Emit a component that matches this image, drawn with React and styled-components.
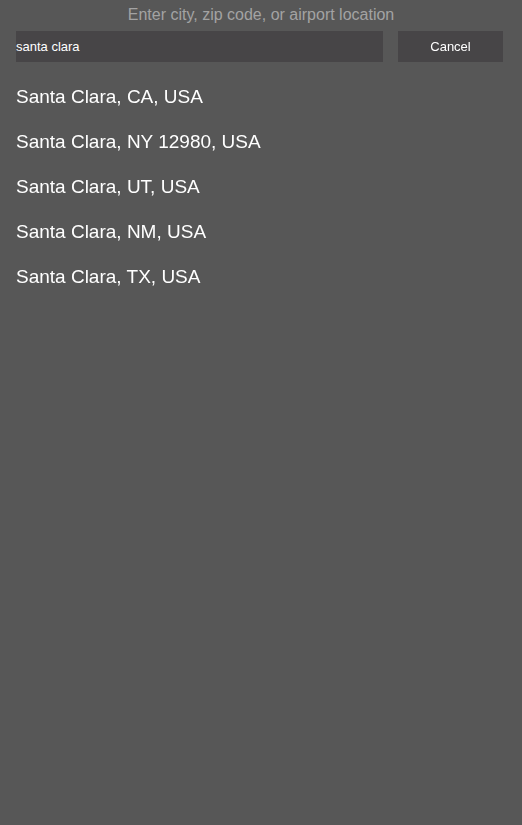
import React, { useState } from 'react'
import styled, { createGlobalStyle } from "styled-components";

const results = [
  "Santa Clara, CA, USA",
  "Santa Clara, NY 12980, USA",
  "Santa Clara, UT, USA",
  "Santa Clara, NM, USA",
  "Santa Clara, TX, USA",
]

const Global = createGlobalStyle`
  html, body {
    margin: 0;
    padding: 0;
    background: #575757;
  }
  body {
    font-family: "Liberation Sans", Arial, sans-serif;
  }
`;

const Page = styled.div`
  min-height: 825px;
  background: #575757;
  display: flex;
  flex-direction: column;
`;

const Prompt = styled.div`
  text-align: center;
  color: #a3a3a3;
  font-size: 16px;
  line-height: 18px;
  padding-top: 6px;
  height: 31px;
  box-sizing: border-box;
`;

const SearchBar = styled.div`
  display: flex;
  gap: 15px;
  padding: 0 19px 0 16px;
  height: 31px;
`;

const Input = styled.input`
  flex: 1;
  min-width: 0;
  background: #474547;
  border: none;
  outline: none;
  padding: 0;
  color: #fff;
  font-family: inherit;
  font-size: 13px;
  caret-color: #fff;
`;

const CancelButton = styled.button`
  width: 105px;
  background: #474547;
  border: none;
  color: #fff;
  font-family: inherit;
  font-size: 13px;
  padding: 0;
  cursor: pointer;
`;

const List = styled.ul`
  list-style: none;
  margin: 0;
  padding: 24px 0 0 16px;
  display: flex;
  flex-direction: column;
`;

const Item = styled.li`
  color: #fff;
  font-size: 19px;
  line-height: 22px;
  height: 45px;
  cursor: pointer;
`;

const App = () => {
  const [query, setQuery] = useState("santa clara");

  return (
    <Page>
      <Global />
      <Prompt>Enter city, zip code, or airport location</Prompt>
      <SearchBar>
        <Input value={query} onChange={(e) => setQuery(e.target.value)} autoFocus />
        <CancelButton>Cancel</CancelButton>
      </SearchBar>
      <List>
        {results.map((item) => (
          <Item key={item}>{item}</Item>
        ))}
      </List>
    </Page>
  )
}

export default App;
